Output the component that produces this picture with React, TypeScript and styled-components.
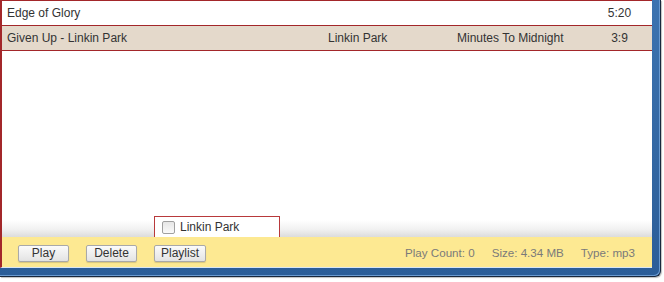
import React from "react";
import styled, { createGlobalStyle } from "styled-components";

const Global = createGlobalStyle`
  html, body { margin: 0; padding: 0; background: #ffffff; }
  body { font-family: "Liberation Sans", Arial, sans-serif; }
`;

const Page = styled.div`
  width: 664px;
  height: 282px;
  background: #ffffff;
  overflow: hidden;
`;

const Frame = styled.div`
  width: 652px;
  height: 268px;
  padding: 0 8px 8px 0;
  background: linear-gradient(to bottom, #3c73b0, #2b5d98);
  border-right: 1px solid #18273d;
  border-bottom: 1px solid #18273d;
  border-bottom-right-radius: 6px;
  box-shadow: inset -1px -1px 0 #6a9ad0, 1px 1px 1px rgba(0,0,0,0.25);
`;

const Panel = styled.div`
  position: relative;
  width: 650px;
  height: 267px;
  border-left: 2px solid #a3272a;
  border-bottom: 1px solid #d8e6f4;
  background: #ffffff;
  display: flex;
  flex-direction: column;
`;

const Table = styled.div`
  border-top: 1px solid #a3272a;
  display: flex;
  flex-direction: column;
`;

const Row = styled.div<{ $selected?: boolean }>`
  display: grid;
  grid-template-columns: 326px 129px 130px 1fr;
  height: 24px;
  align-items: center;
  border-bottom: 1px solid #a3272a;
  background: ${(p) => (p.$selected ? "#e4d9cb" : "#ffffff")};
  font-size: 12px;
  color: #333333;
`;

const Cell = styled.div<{ $center?: boolean; $pad?: number }>`
  padding-left: ${(p) => p.$pad ?? 0}px;
  text-align: ${(p) => (p.$center ? "center" : "left")};
  white-space: nowrap;
  overflow: hidden;
`;

const Empty = styled.div`
  flex: 1;
  background: linear-gradient(to bottom, #ffffff calc(100% - 17px), #f2f2f2 calc(100% - 8px), #dcdcdc 100%);
`;

const Bar = styled.div`
  height: 30px;
  background: #fde992;
  display: flex;
  align-items: center;
  padding: 0 17px 0 16px;
  font-size: 12px;
`;

const Buttons = styled.div`
  display: flex;
  gap: 17px;
  padding-top: 2px;
`;

const Button = styled.button<{ $w: number }>`
  width: ${(p) => p.$w}px;
  height: 17px;
  padding: 0;
  font-family: "Liberation Sans", Arial, sans-serif;
  font-size: 12px;
  color: #333333;
  background: linear-gradient(to bottom, #fbfbfb, #e3e3e3);
  border: 1px solid #a9a9a9;
  border-radius: 2px;
  box-shadow: 0 1px 1px rgba(0,0,0,0.15);
  line-height: 15px;
`;

const Info = styled.div`
  margin-left: auto;
  display: flex;
  gap: 17px;
  color: #7a7a7a;
  font-size: 11.6px;
  padding-top: 1px;
`;

const Popup = styled.div`
  position: absolute;
  left: 152px;
  bottom: 30px;
  box-sizing: border-box;
  width: 126px;
  height: 21px;
  background: #ffffff;
  border: 1px solid #b8393b;
  border-bottom: none;
  display: flex;
  align-items: center;
  padding-left: 7px;
  gap: 5px;
  font-size: 12px;
  color: #333333;
`;

const Check = styled.span`
  width: 11px;
  height: 11px;
  border: 1px solid #a0a0a0;
  border-radius: 2px;
  background: linear-gradient(to bottom, #e6e6e6, #fafafa);
`;

const songs = [
  { title: "Edge of Glory", artist: "", album: "", time: "5:20", selected: false },
  { title: "Given Up - Linkin Park", artist: "Linkin Park", album: "Minutes To Midnight", time: "3:9", selected: true },
];

export default function App() {
  return (
    <Page>
      <Global />
      <Frame>
        <Panel>
          <Table>
            {songs.map((s) => (
              <Row key={s.title} $selected={s.selected}>
                <Cell $pad={5}>{s.title}</Cell>
                <Cell>{s.artist}</Cell>
                <Cell>{s.album}</Cell>
                <Cell $center>{s.time}</Cell>
              </Row>
            ))}
          </Table>
          <Empty />
          <Popup>
            <Check />
            <span>Linkin Park</span>
          </Popup>
          <Bar>
            <Buttons>
              <Button $w={51}>Play</Button>
              <Button $w={51}>Delete</Button>
              <Button $w={52}>Playlist</Button>
            </Buttons>
            <Info>
              <span>Play Count: 0</span>
              <span>Size: 4.34 MB</span>
              <span>Type: mp3</span>
            </Info>
          </Bar>
        </Panel>
      </Frame>
    </Page>
  );
}
